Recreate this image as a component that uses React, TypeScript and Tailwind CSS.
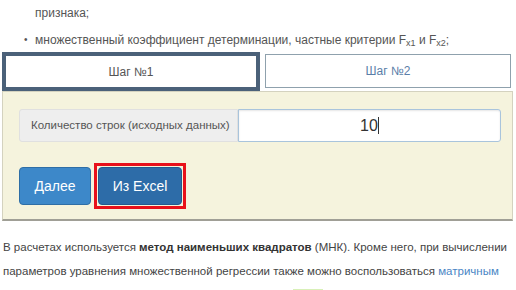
import React from 'react';

export default function App() {
  return (
    <div className="w-[516px] h-[290px] overflow-hidden bg-white text-[#444] font-['Liberation_Sans',Arial,sans-serif]">
      <div className="pl-[35px] pt-[4px] text-[12px] leading-[18px] text-[#555]">признака;</div>
      <div className="flex items-center pl-[24px] mt-[9px] text-[12px] leading-[18px] text-[#555]">
        <span className="w-[11px] text-[10px]">•</span>
        <span>
          множественный коэффициент детерминации, частные критерии F<sub className="text-[9px]">x1</sub> и F
          <sub className="text-[9px]">x2</sub>;
        </span>
      </div>

      <div className="mx-[2px] mt-[3px] w-[511px]">
        <div className="flex gap-[5px]">
          <button className="w-[258px] h-[39px] border-[4px] border-[#4b6179] bg-white text-[12px] text-[#555]">
            Шаг №1
          </button>
          <button className="w-[246px] h-[34px] mt-[2px] border border-[#8fa1ad] bg-white text-[12px] text-[#5a7ea8]">
            Шаг №2
          </button>
        </div>

        <div className="bg-[#f5f3dd] border border-[#d4d2bf] border-b-[2px] border-b-[#a09f96] px-[16px] pt-[17px] pb-[10px]">
          <div className="flex h-[33px] w-[482px]">
            <div className="flex items-center w-[219px] px-[11px] bg-[#eeeeee] border border-[#e0e0e0] rounded-l-[3px] text-[11.5px] text-[#555] whitespace-nowrap">
              Количество строк (исходных данных)
            </div>
            <div className="flex-1 flex items-center bg-white border border-[#a9c4dc] rounded-r-[3px] shadow-[inset_0_1px_2px_rgba(0,0,0,0.1)]">
              <span className="ml-[121px] text-[16px] text-[#333]">10</span>
              <span className="w-px h-[17px] bg-[#333]" />
            </div>
          </div>

          <div className="flex items-center gap-[3px] mt-[21px]">
            <button className="w-[72px] h-[38px] rounded-[4px] bg-[#3d88c9] border border-[#2e6ea6] text-white text-[14px]">
              Далее
            </button>
            <div className="border-[3px] border-[#e8101a] p-px">
              <button className="w-[84px] h-[38px] rounded-[4px] bg-[#2d6ca8] border border-[#245a8d] text-white text-[14px]">
                Из Excel
              </button>
            </div>
          </div>
        </div>
      </div>

      <div className="px-[3px] mt-[14px] text-[11.5px] leading-[24px] text-[#444] whitespace-nowrap">
        <p>
          В расчетах используется <b className="text-[#333]">метод наименьших квадратов</b> (МНК). Кроме него, при вычислении
        </p>
        <p>
          параметров уравнения множественной регрессии также можно воспользоваться{' '}
          <span className="text-[#4a86c5]">матричным</span>
        </p>
        <p>
          <span className="inline-block ml-[290px] w-[30px] h-[14px] bg-[#d8f0b8] align-middle" />
        </p>
      </div>
    </div>
  );
}
